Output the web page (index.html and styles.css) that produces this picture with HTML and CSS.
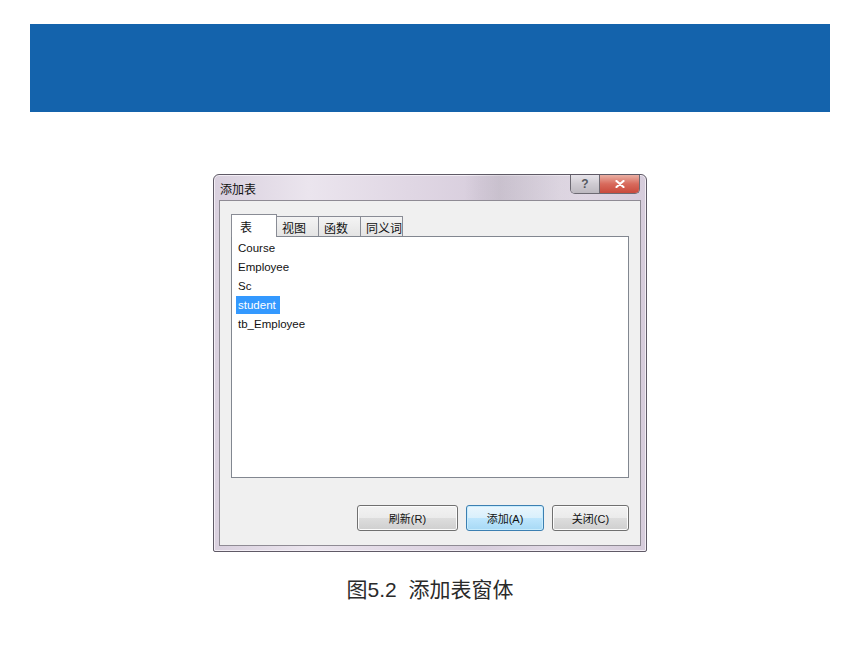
FILE: index.html
```html
<!DOCTYPE html>
<html>
<head>
    <title>添加表窗体</title>
    <link rel="stylesheet" href="styles.css">
</head>
<body>
<div class="banner"></div>

<div class="figure">
    <div class="dialog">
        <div class="titlebar">
            <span class="title">添加表</span>
            <div class="caption-btns">
                <span class="cap-btn help">?</span>
                <span class="cap-btn close">
                    <svg width="10" height="8" viewBox="0 0 10 8">
                        <path d="M1.5 1 L8.5 7 M8.5 1 L1.5 7" stroke="#fff" stroke-width="2.2" stroke-linecap="round"/>
                    </svg>
                </span>
            </div>
        </div>
        <div class="client">
            <div class="tabs">
                <span class="tab active">表</span>
                <span class="tab t2">视图</span>
                <span class="tab t3">函数</span>
                <span class="tab t4">同义词</span>
            </div>
            <ul class="list">
                <li><span>Course</span></li>
                <li><span>Employee</span></li>
                <li><span>Sc</span></li>
                <li><span class="selected">student</span></li>
                <li><span>tb_Employee</span></li>
            </ul>
            <div class="actions">
                <button class="btn refresh">刷新(R)</button>
                <button class="btn default">添加(A)</button>
                <button class="btn close-btn">关闭(C)</button>
            </div>
        </div>
    </div>
    <p class="caption">图5.2&nbsp;&nbsp;添加表窗体</p>
</div>
</body>
</html>
```

FILE: styles.css
```css
body {
    margin: 0;
    background: #fff;
    font-family: "Liberation Sans", "Noto Sans CJK SC", sans-serif;
}

.banner {
    margin: 24px 30px 0 30px;
    height: 88px;
    background-color: #1463ac;
}

.figure {
    display: flex;
    flex-direction: column;
    align-items: center;
}

.dialog {
    box-sizing: border-box;
    width: 434px;
    height: 378px;
    margin-top: 62px;
    border: 1px solid #5f5a66;
    border-radius: 6px 6px 2px 2px;
    background: linear-gradient(90deg, #d9d0de 0%, #ebe5ee 22%, #e0d7e4 45%, #d8cedd 62%, #e2dae6 80%, #d6ccdb 100%);
    box-shadow: inset 0 0 0 1px #f3eef5;
    display: flex;
    flex-direction: column;
}

.titlebar {
    height: 25px;
    display: flex;
    align-items: flex-start;
    justify-content: space-between;
    background: linear-gradient(90deg, transparent 58%, rgba(160, 155, 165, 0.3) 66%, rgba(185, 180, 190, 0.25) 76%, transparent 86%);
}

.title {
    padding: 5px 0 0 6px;
    font-size: 12px;
    color: #111;
}

.caption-btns {
    display: flex;
    margin-right: 6px;
    border: 1px solid #6d6a73;
    border-top: none;
    border-radius: 0 0 5px 5px;
    overflow: hidden;
}

.cap-btn {
    height: 18px;
    display: flex;
    align-items: center;
    justify-content: center;
}

.help {
    width: 28px;
    background: linear-gradient(#e7e4ea, #cfcbd2 50%, #bdb9c0);
    border-right: 1px solid #6d6a73;
    color: #55585f;
    font-size: 12px;
    font-weight: bold;
}

.close {
    width: 39px;
    background: linear-gradient(#eab0a4, #d86a5c 50%, #c94a3c);
}

.client {
    flex: 1;
    margin: 0 5px 5px 5px;
    padding: 13px 11px 0 11px;
    border: 1px solid #8f8b94;
    background: #f0f0f0;
    display: flex;
    flex-direction: column;
}

.tabs {
    display: flex;
    align-items: flex-end;
    height: 22px;
    font-size: 12px;
    color: #111;
}

.tab {
    box-sizing: border-box;
    height: 20px;
    padding: 2px 0 0 5px;
    border: 1px solid #898c95;
    border-bottom: none;
    margin-right: -1px;
    background: linear-gradient(#f4f4f4, #e4e4e4);
}

.tab.active {
    width: 46px;
    height: 23px;
    padding: 3px 0 0 8px;
    margin-bottom: -1px;
    background: #fff;
    position: relative;
    z-index: 1;
}

.t2 { width: 43px; }
.t3 { width: 43px; }
.t4 { width: 43px; }

.list {
    margin: 0;
    list-style: none;
    height: 242px;
    box-sizing: border-box;
    padding: 1px 0 0 4px;
    border: 1px solid #828790;
    background: #fff;
    font-size: 11.5px;
    color: #111;
}

.list li {
    height: 19px;
    display: flex;
    align-items: center;
}

.list li span {
    padding: 0 4px 0 2px;
    line-height: 18px;
}

.list .selected {
    background: #3399ff;
    color: #fff;
}

.actions {
    display: flex;
    justify-content: flex-end;
    gap: 8px;
    margin-top: 27px;
}

.btn {
    height: 26px;
    border: 1px solid #707070;
    border-radius: 3px;
    background: linear-gradient(#f2f2f2 0%, #ebebeb 50%, #dddddd 51%, #cfcfcf 100%);
    box-shadow: inset 0 0 0 1px #fcfcfc;
    font-family: "Liberation Sans", "Noto Sans CJK SC", sans-serif;
    font-size: 11px;
    color: #111;
    padding: 0;
}

.refresh { width: 101px; }
.default {
    width: 78px;
    border-color: #3c7fb1;
    background: linear-gradient(#eaf6fd 0%, #d9f0fc 50%, #bee6fd 51%, #a7d9f5 100%);
    box-shadow: inset 0 0 0 1px #c8ecfd;
}
.close-btn { width: 77px; }

.caption {
    margin: 26px 0 0 0;
    font-size: 21px;
    line-height: 24px;
    color: #2a2a2a;
}
```
